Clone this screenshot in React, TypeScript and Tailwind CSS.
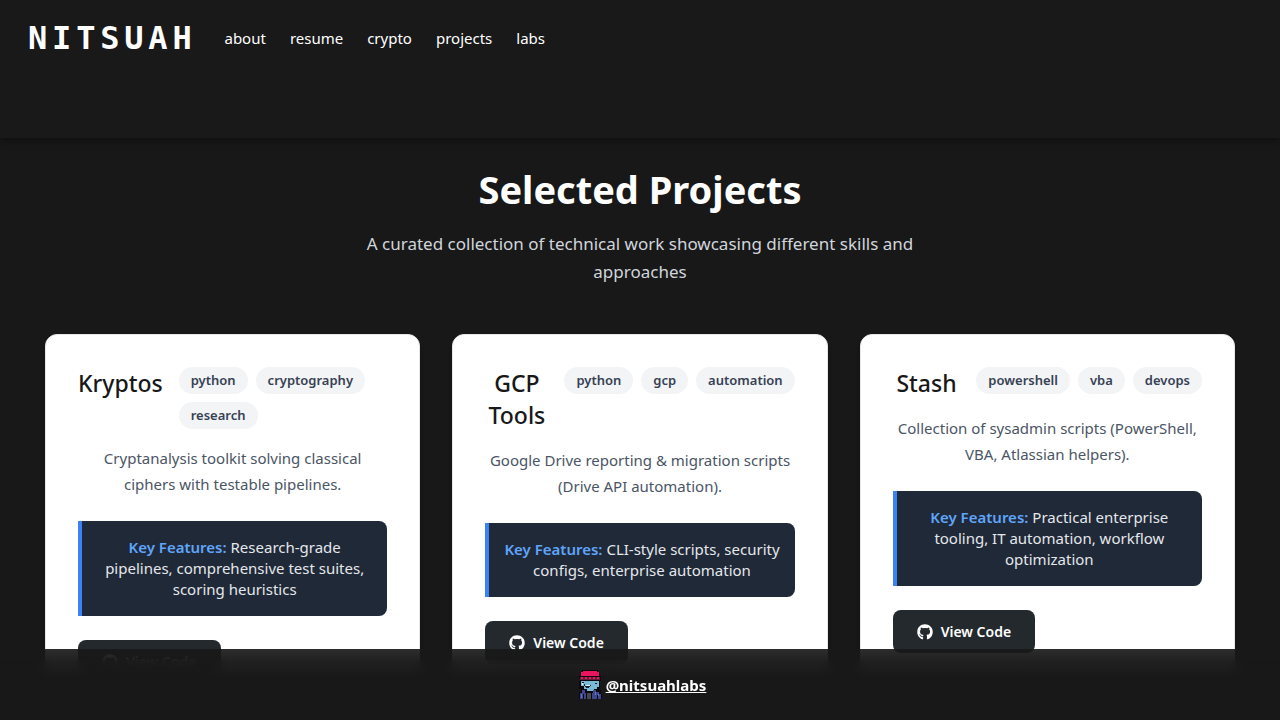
import { FaGithub } from "react-icons/fa";

type Project = {
  title: string;
  tags: string[];
  description: string;
  features: string;
};

const links = ["about", "resume", "crypto", "projects", "labs"];

const projects: Project[] = [
  {
    title: "Kryptos",
    tags: ["python", "cryptography", "research"],
    description: "Cryptanalysis toolkit solving classical ciphers with testable pipelines.",
    features: "Research-grade pipelines, comprehensive test suites, scoring heuristics",
  },
  {
    title: "GCP Tools",
    tags: ["python", "gcp", "automation"],
    description: "Google Drive reporting & migration scripts (Drive API automation).",
    features: "CLI-style scripts, security configs, enterprise automation",
  },
  {
    title: "Stash",
    tags: ["powershell", "vba", "devops"],
    description: "Collection of sysadmin scripts (PowerShell, VBA, Atlassian helpers).",
    features: "Practical enterprise tooling, IT automation, workflow optimization",
  },
];

function Avatar() {
  return (
    <svg viewBox="0 0 24 30" className="h-[30px] w-6" shapeRendering="crispEdges" aria-hidden="true">
      <path fill="#09090d" d="M4 0h16v2h2v4h1v5h-1v7h-1v2h2v4h1v5H1v-7h2v-3H1V11h1V9H1V6h1V2h2z" />
      <path fill="#ea155c" d="M5 1h14v1h2v4H3V2h2z" />
      <path fill="#6d1739" d="M2 7h20v3H2z" />
      <path fill="#d3245c" d="M3 7h2v2H3zM7 7h2v2H7zM11 7h2v2h-2zM15 7h2v2h-2zM19 7h2v2h-2z" />
      <path fill="#79bad6" d="M3 11h18v6h-2v2h-3v2H9v-2H6v-3H3z" />
      <path fill="#15202b" d="M4 12h2v1H4zM17 13h2v1h-2zM6 14h1v2H6zM7 16h5v1H7zM8 17h3v1H8zM12 15h1v1h-1z" />
      <path fill="#e4f4f8" d="M4 13h1v2H4zM8 15h4v1H8z" />
      <path fill="#3d478f" d="M4 20h3v3h1v6H6v-5H5v5H2v-6h2zM15 20h3v2h3v2h2v5h-3v-4h-1v4h-5v-6h1z" />
      <path fill="#6572b7" d="M3 24h1v4H3zM17 22h1v3h-1zM20 24h1v2h-1z" />
      <path fill="#48484d" d="M9 23h4v6H9z" />
    </svg>
  );
}

function ProjectCard({ title, tags, description, features }: Project) {
  return (
    <article className="rounded-xl border border-gray-200 bg-white p-8 text-center shadow-md">
      <div className="mb-4 flex items-start justify-between gap-4">
        <h2 className="flex-1 text-[23px] leading-8 font-medium text-[#181818]">{title}</h2>
        <ul className="flex flex-wrap gap-2">
          {tags.map((tag) => (
            <li
              key={tag}
              className="rounded-full bg-gray-100 px-3 py-1 text-[13px] leading-[19px] font-semibold text-gray-700"
            >
              {tag}
            </li>
          ))}
        </ul>
      </div>
      <p className="mb-6 text-[15px] leading-[26px] text-gray-600">{description}</p>
      <p className="mb-6 rounded-r-lg border-l-4 border-[#3b82f6] bg-[#1f2937] px-3 py-4 text-[15px] leading-[21px] text-gray-200">
        <strong className="font-semibold text-[#60a5fa]">Key Features:</strong> {features}
      </p>
      <div className="flex">
        <a
          href="#code"
          className="flex items-center gap-2 rounded-lg bg-[#24292e] px-6 py-3 text-[14px] leading-[19px] font-semibold text-white"
        >
          <FaGithub className="size-4" />
          View Code
        </a>
      </div>
    </article>
  );
}

export default function App() {
  return (
    <div className="relative flex h-screen flex-col overflow-hidden bg-[#181818] font-['Noto_Sans',sans-serif] text-white">
      <header className="relative z-10 flex min-h-[138px] items-start gap-7 bg-[#191919] px-7 pt-4 shadow-[0_2px_8px_rgba(0,0,0,0.45)]">
        <a
          href="#home"
          className="font-['DejaVu_Sans_Mono',monospace] text-[32px] leading-[44px] font-bold tracking-[0.15em]"
        >
          NITSUAH
        </a>
        <nav className="flex gap-6 pt-[10px] text-[15px] leading-6">
          {links.map((link) => (
            <a key={link} href={`#${link}`}>
              {link}
            </a>
          ))}
        </nav>
      </header>

      <main className="min-h-0 flex-1 overflow-y-auto px-[45px] pt-6 pb-24 [scrollbar-width:none]">
        <div className="mx-auto mb-12 max-w-[600px] text-center">
          <h1 className="mb-[14px] text-[38px] leading-[54px] font-bold">Selected Projects</h1>
          <p className="text-[17px] leading-7 text-gray-300">
            A curated collection of technical work showcasing different skills and approaches
          </p>
        </div>
        <div className="grid grid-cols-3 items-start gap-8">
          {projects.map((project) => (
            <ProjectCard key={project.title} {...project} />
          ))}
        </div>
      </main>

      <footer className="absolute inset-x-0 bottom-0 z-10">
        <div className="h-[11px] bg-linear-to-b from-[#181818]/91 to-[#181818]/96" />
        <div className="flex h-[60px] items-start justify-center bg-linear-to-b from-[#181818]/96 to-[#181818] to-30% pt-[9px] pl-1 backdrop-blur-[8px]">
          <a href="#nitsuahlabs" className="flex items-center gap-1 text-[15px] leading-8 font-bold">
            <Avatar />
            <span className="underline">@nitsuahlabs</span>
          </a>
        </div>
      </footer>
    </div>
  );
}
